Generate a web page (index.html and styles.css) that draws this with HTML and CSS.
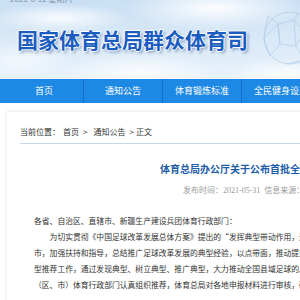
FILE: index.html
```html
<!DOCTYPE html>
<html lang="zh-CN">
<head>
<meta charset="utf-8">
<title>体育总局办公厅关于公布首批全国县域足球典型名单的通知</title>
<link rel="stylesheet" href="styles.css">
</head>
<body>
<div class="page">
  <header class="header">
    <div class="date">2021-6-12 星期六</div>
    <h1 class="site-title">国家体育总局群众体育司</h1>
    <svg class="deco" viewBox="0 0 60 60" width="60" height="60" aria-hidden="true">
      <g fill="none" stroke="#b4cfea" stroke-width="0.8">
        <circle cx="32" cy="30" r="26"/>
        <path d="M20 16 L36 12 L46 24 L38 38 L22 36 Z"/>
        <path d="M20 16 L10 8 M36 12 L40 4 M46 24 L57 22 M38 38 L46 52 M22 36 L12 48"/>
        <path d="M20 16 L22 36 M36 12 L38 38 M10 8 L6 30 L12 48 M46 52 L28 56"/>
        <path d="M6 30 L20 16 M57 22 L46 52"/>
      </g>
    </svg>
  </header>
  <nav class="nav">
    <a class="nav-item" href="#">首页</a>
    <a class="nav-item" href="#">通知公告</a>
    <a class="nav-item" href="#">体育锻炼标准</a>
    <a class="nav-item" href="#">全民健身设施</a>
  </nav>
  <main class="card">
    <div class="crumb">当前位置：<a class="crumb-link" href="#">首页</a><span class="sep">&gt;</span><a class="crumb-link tight" href="#">通知公告</a><span class="sep sep-2">&gt;</span><span>正文</span></div>
    <article class="article">
      <h2 class="title">体育总局办公厅关于公布首批全国县域足球典型名单的通知</h2>
      <div class="meta"><span class="meta-item">发布时间：<span class="meta-num">2021-05-31</span></span><span class="meta-item">信息来源：群众体育司</span></div>
      <div class="body">
        <p class="salute">各省、自治区、直辖市、新疆生产建设兵团体育行政部门：</p>
        <p class="para">为切实贯彻《中国足球改革发展总体方案》提出的“发挥典型带动作用，逐步推动县域足球发展”要求，各省（区、<br>市，加强扶持和指导，总结推广足球改革发展的典型经验，以点带面，推动提升县域足球发展水平，体育总局开展了县域足球典<br>型推荐工作，通过发现典型、树立典型、推广典型，大力推动全国县域足球的发展。经各省<br>（区、市）体育行政部门认真组织推荐，体育总局对各地申报材料进行审核，确定了首批全国县域足球典型名单。</p>
      </div>
    </article>
  </main>
</div>
</body>
</html>
```

FILE: styles.css
```css
html, body {
  margin: 0;
  padding: 0;
  overflow: hidden;
  background: #ffffff;
}

.page {
  width: 640px;
  font-family: "Noto Sans CJK SC", "Noto Sans", sans-serif;
}

.header {
  position: relative;
  height: 79px;
  overflow: hidden;
  background:
    radial-gradient(ellipse 70px 14px at 60px 18px, rgba(255,255,255,0.85), rgba(255,255,255,0)),
    radial-gradient(ellipse 90px 22px at 215px 8px, rgba(255,255,255,0.95), rgba(255,255,255,0)),
    radial-gradient(ellipse 80px 18px at 140px 72px, rgba(255,255,255,0.8), rgba(255,255,255,0)),
    radial-gradient(ellipse 60px 16px at 285px 74px, rgba(255,255,255,0.8), rgba(255,255,255,0)),
    radial-gradient(ellipse 50px 18px at 20px 60px, rgba(255,255,255,0.6), rgba(255,255,255,0)),
    linear-gradient(#c9dff4, #dcebf8 60%, #e9f2fb);
}

.date {
  margin-top: -6px;
  padding-left: 10px;
  font-size: 8px;
  line-height: 10px;
  color: #8394a8;
}

.site-title {
  margin: 25px 0 0 17px;
  font-size: 21px;
  line-height: 21px;
  font-weight: 700;
  color: #1a5cbf;
  letter-spacing: 0;
  text-shadow:
    1px 0 0 #fff, -1px 0 0 #fff, 0 1px 0 #fff, 0 -1px 0 #fff,
    2px 2px 3px rgba(10, 50, 120, 0.45);
}

.deco {
  position: absolute;
  left: 258px;
  top: 8px;
}

.nav {
  display: flex;
  height: 24px;
  padding-left: 5px;
  background: #1e89e4;
}

.nav-item {
  flex: none;
  width: 78px;
  border-right: 1px solid #1571c8;
  color: #ffffff;
  font-size: 9px;
  line-height: 24px;
  text-align: center;
  text-decoration: none;
}

.card {
  display: block;
  width: 566px;
  margin: 9px 0 0 7px;
  padding: 0 13px 20px;
  background: #ffffff;
  box-shadow: 0 0 4px rgba(0, 0, 0, 0.13);
}

.crumb {
  padding: 14px 0 5px;
  font-size: 8px;
  line-height: 12px;
  color: #333333;
  border-bottom: 1px solid #c3d9ef;
  white-space: nowrap;
}

.crumb-link {
  color: #333333;
  text-decoration: none;
  margin-left: 3px;
}

.crumb-link.tight {
  margin-left: 0;
}

.sep {
  margin: 0 6px 0 4px;
}

.sep.sep-2 {
  margin: 0 2px 0 4px;
}

.article {
  display: block;
}

.title {
  margin: 0;
  padding: 18px 0 0 140px;
  font-size: 10px;
  line-height: 14px;
  font-weight: 700;
  color: #1d5da8;
  white-space: nowrap;
}

.meta {
  margin-top: 8px;
  padding-left: 163px;
  font-size: 8px;
  line-height: 12px;
  color: #999999;
  white-space: nowrap;
}

.meta-num {
  font-family: "Liberation Serif", serif;
}

.meta-item {
  margin-right: 4px;
}

.body {
  margin-top: 16px;
  padding-left: 14px;
  font-size: 7.8px;
  line-height: 16px;
  color: #333333;
  white-space: nowrap;
}

.salute,
.para {
  margin: 0;
}

.para {
  text-indent: 2em;
}
```
